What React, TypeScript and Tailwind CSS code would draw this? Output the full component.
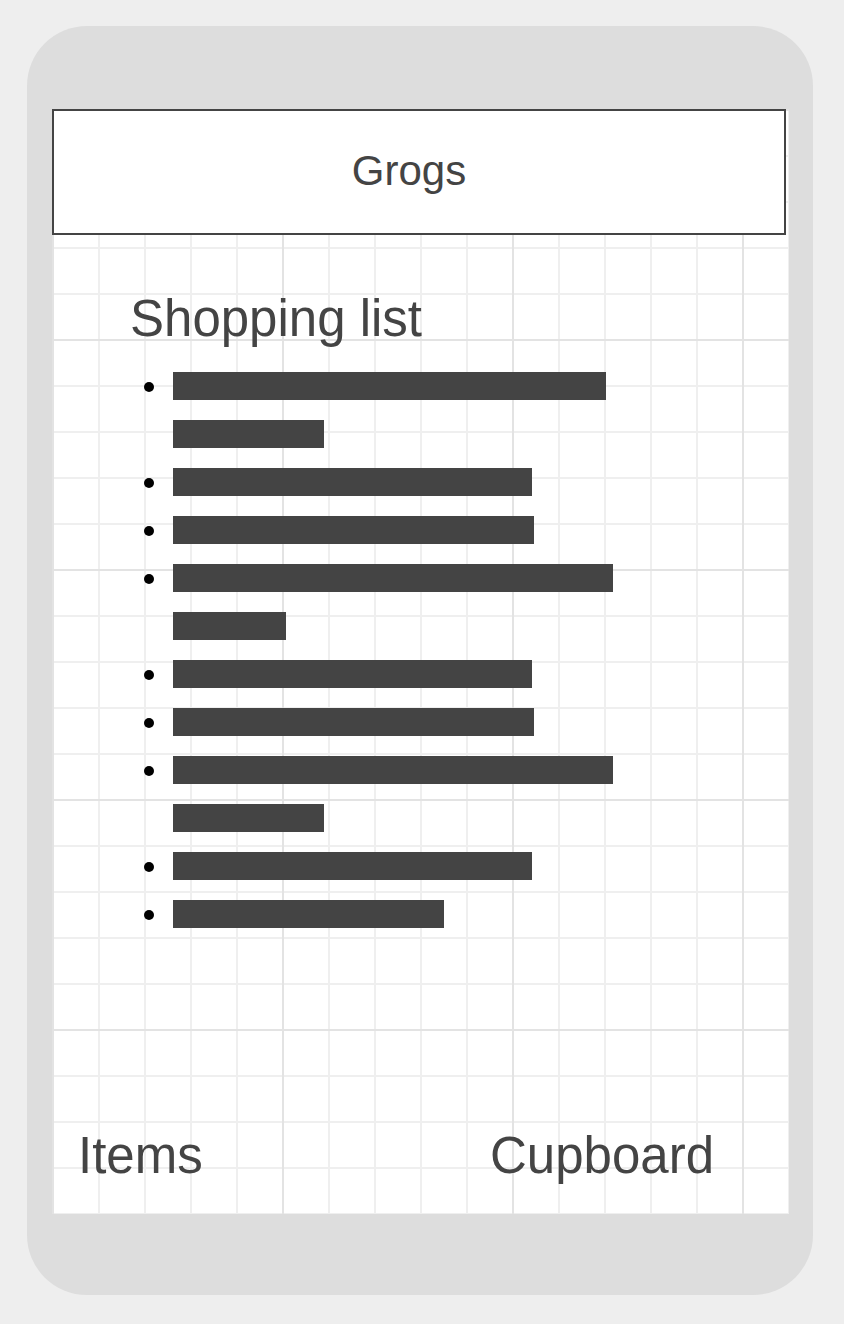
import React from 'react';

type Item = { lines: number[] };

const items: Item[] = [
  { lines: [433, 151] },
  { lines: [359] },
  { lines: [361] },
  { lines: [440, 113] },
  { lines: [359] },
  { lines: [361] },
  { lines: [440, 151] },
  { lines: [359] },
  { lines: [271] },
];

function ListItem({ item }: { item: Item }) {
  return (
    <li className="flex">
      <div className="flex h-[48px] w-[29px] items-center pt-[2px]">
        <span className="h-[10px] w-[10px] rounded-full bg-black" />
      </div>
      <div className="flex flex-col">
        {item.lines.map((w, i) => (
          <div key={i} className="flex h-[48px] items-center">
            {/* redacted text placeholder, width comes from data */}
            <div className="h-[28px] bg-[#444444]" style={{ width: w }} />
          </div>
        ))}
      </div>
    </li>
  );
}

export default function App() {
  return (
    <div
      className="min-h-[1324px] bg-[#eeeeee] pl-[27px] pt-[26px]"
      style={{ fontFamily: '"Liberation Sans", Arial, sans-serif' }}
    >
      {/* phone frame */}
      <div className="flex h-[1269px] w-[786px] flex-col rounded-[60px] bg-[#dddddd] pl-[25px] pt-[83px]">
        {/* screen with grid paper */}
        <div className="flex h-[1105px] w-[737px] flex-col bg-white bg-[linear-gradient(to_right,#e3e3e3_2px,transparent_2px),linear-gradient(to_bottom,#e3e3e3_2px,transparent_2px),linear-gradient(to_right,#efefef_2px,transparent_2px),linear-gradient(to_bottom,#efefef_2px,transparent_2px)] bg-[length:230px_230px,230px_230px,46px_46px,46px_46px]">
          {/* header */}
          <header className="flex h-[126px] w-[734px] items-center justify-center border-2 border-[#444444] bg-white pb-[2px] pr-[20px]">
            <h1 className="text-[42px] leading-none text-[#444444]">Grogs</h1>
          </header>

          <main className="pl-[78px] pt-[60px]">
            <h2 className="text-[51px] leading-[48px] text-[#444444]">Shopping list</h2>
            <ul className="mt-[19px] flex flex-col pl-[14px]">
              {items.map((item, i) => (
                <ListItem key={i} item={item} />
              ))}
            </ul>
          </main>

          {/* bottom nav */}
          <nav className="mt-auto flex items-center justify-between pb-[34px] pl-[26px] pr-[75px]">
            <span className="text-[51px] leading-[48px] text-[#444444]">Items</span>
            <span className="text-[51px] leading-[48px] text-[#444444]">Cupboard</span>
          </nav>
        </div>
      </div>
    </div>
  );
}
